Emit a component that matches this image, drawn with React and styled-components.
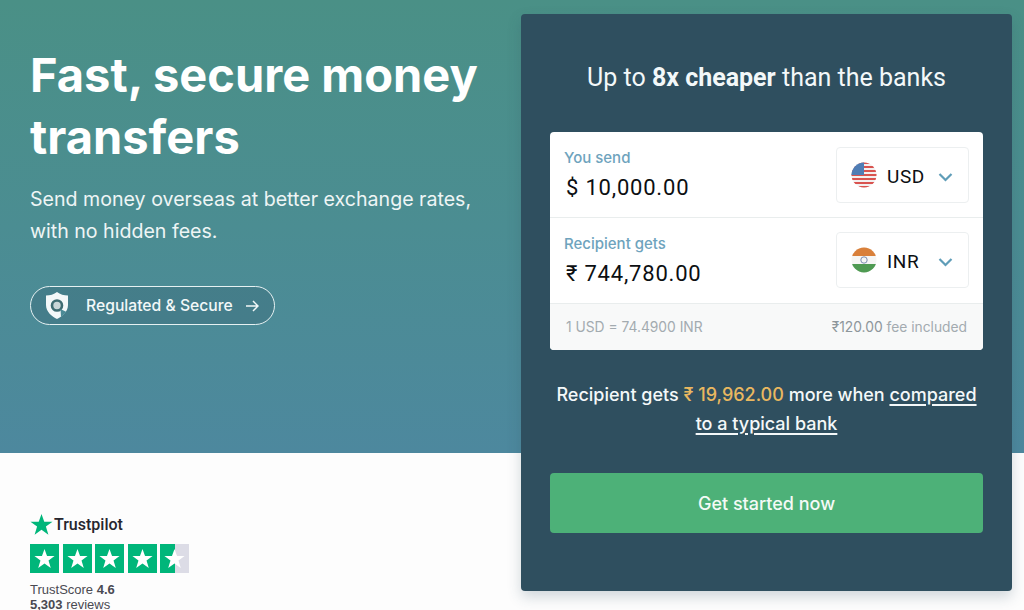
import React from 'react';
import styled, { createGlobalStyle } from 'styled-components';

const GlobalStyle = createGlobalStyle`
  html, body {
    margin: 0;
    padding: 0;
    background: #fff;
    overflow: hidden;
  }
  * {
    box-sizing: border-box;
  }
`;

const Page = styled.div`
  width: 1024px;
  height: 610px;
  overflow: hidden;
  display: grid;
  grid-template-columns: 521px 491px;
  font-family: Inter, "Noto Sans", sans-serif;
  background:
    linear-gradient(180deg, #4a9086 0%, #4b8d92 50%, #4d889e 100%) top / 100% 453px no-repeat,
    #fdfdfd;
`;

const Left = styled.div`
  padding: 44px 30px 0;
  display: flex;
  flex-direction: column;
  height: 610px;
`;

const Title = styled.h1`
  margin: 0;
  color: #fff;
  font-size: 47px;
  line-height: 62px;
  font-weight: 700;
`;

const Lead = styled.p`
  margin: 15px 0 0;
  color: #eef5f5;
  font-size: 19.6px;
  line-height: 32px;
  font-weight: 400;
`;

const Pill = styled.a`
  margin-top: 39px;
  width: 245px;
  height: 39px;
  border: 1px solid #e6f1f2;
  border-radius: 20px;
  background: rgba(47, 79, 95, 0.22);
  display: flex;
  align-items: center;
  padding: 0 15px;
  color: #f2f8f8;
  font-size: 15.7px;
  font-weight: 500;
`;

const PillLabel = styled.span`
  margin-left: 18px;
  flex: 1;
`;

const Trust = styled.div`
  margin-top: auto;
  height: 97px;
  color: #4a4a52;
  font-family: "Liberation Sans", Arial, sans-serif;
  font-size: 13px;
  line-height: 15px;
`;

const Brand = styled.div`
  display: flex;
  align-items: center;
  gap: 1px;
  height: 22px;
  color: #26262e;
  font-family: Roboto, sans-serif;
  font-size: 16px;
  font-weight: 500;
`;

const Stars = styled.div`
  display: flex;
  gap: 3.5px;
  margin: 9px 0 9px;
`;

const StarBox = styled.div`
  width: 29px;
  height: 29px;
  display: flex;
  align-items: center;
  justify-content: center;
  background: ${p => p.$half
    ? 'linear-gradient(90deg, #00b67a 0 52%, #dcdce6 52% 100%)'
    : '#00b67a'};
`;

const Right = styled.div`
  padding-top: 14px;
`;

const Card = styled.section`
  width: 491px;
  height: 577px;
  background: #2f4f5f;
  border-radius: 4px;
  padding: 47px 29px 0;
  box-shadow: 0 6px 14px rgba(47, 79, 95, 0.22);
`;

const Headline = styled.h2`
  margin: 0;
  color: #f3f8f9;
  font-family: Roboto, sans-serif;
  font-size: 25px;
  line-height: 33px;
  font-weight: 400;
  text-align: center;
  b {
    font-weight: 700;
  }
`;

const Calculator = styled.div`
  margin-top: 38px;
  background: #fff;
  border-radius: 4px;
  overflow: hidden;
  height: 218px;
`;

const Row = styled.div`
  height: 86px;
  padding: 15px 14px 0 14px;
  display: flex;
  justify-content: space-between;
  border-bottom: 1px solid #e9eded;
`;

const Label = styled.div`
  color: #6ea3bd;
  font-size: 15px;
  line-height: 22px;
  font-weight: 500;
`;

const Amount = styled.div`
  margin-top: 6px;
  margin-left: 2px;
  color: #0c0f12;
  font-family: Roboto, sans-serif;
  font-size: 22px;
  line-height: 26px;
  letter-spacing: 0.8px;
`;

const Select = styled.div`
  width: 133px;
  height: 56px;
  margin-top: ${p => p.$raised ? '-1px' : '0'};
  border: 1px solid #eceff0;
  border-radius: 4px;
  display: flex;
  align-items: center;
  padding: 0 15px 0 14px;
  color: #0c0f12;
  font-family: Roboto, sans-serif;
  font-size: 19px;
  letter-spacing: 0.6px;
  svg:last-child {
    margin-top: 3px;
  }
`;

const Code = styled.span`
  margin-left: 10px;
  padding-top: 3px;
  flex: 1;
`;

const Rate = styled.div`
  height: 46px;
  background: #f8f9f9;
  padding: 0 16px;
  display: flex;
  align-items: center;
  justify-content: space-between;
  color: #a3abb0;
  font-size: 13.8px;
`;

const Fee = styled.span`
  b {
    font-weight: 400;
    color: #8d969b;
  }
`;

const Savings = styled.p`
  margin: 30px 0 0;
  color: #f4f8f9;
  font-size: 18px;
  line-height: 29px;
  font-weight: 500;
  text-align: center;
  white-space: nowrap;
  span {
    color: #e9b860;
  }
  u {
    text-underline-offset: 3px;
    text-decoration-thickness: 1.5px;
  }
`;

const Cta = styled.a`
  margin-top: 35px;
  height: 60px;
  border-radius: 4px;
  background: #4db178;
  color: #f4faf6;
  font-size: 18px;
  font-weight: 500;
  display: flex;
  align-items: center;
  justify-content: center;
`;

const ShieldIcon = () => (
  <svg width="22" height="27" viewBox="0 0 22 27">
    <path d="M11 0 C14 2.5 18 3.5 22 3.5 V13 C22 20 16 24.5 11 27 C6 24.5 0 20 0 13 V3.5 C4 3.5 8 2.5 11 0 Z" fill="#f4f8f9" />
    <circle cx="11" cy="13.5" r="5" fill="#c9d6d8" stroke="#3f6c72" strokeWidth="2.6" />
    <path d="M14.5 17 L20.5 20 L15 25 Z" fill="#4b8a96" />
  </svg>
);

const ArrowIcon = () => (
  <svg width="13" height="14" viewBox="0 0 13 14" fill="none" stroke="#f2f8f8" strokeWidth="1.5">
    <path d="M0 7 H12 M7 2 L12 7 L7 12" />
  </svg>
);

const Chevron = () => (
  <svg width="15" height="10" viewBox="0 0 15 10" fill="none" stroke="#5f9db8" strokeWidth="2.2">
    <path d="M1.5 2 L7.5 8 L13.5 2" />
  </svg>
);

const StarIcon = ({ size = 21, color = '#fff' }) => (
  <svg width={size} height={size} viewBox="0 0 24 24">
    <path d="M12 1 L14.9 9 H23.5 L16.6 14.2 L19.2 22.8 L12 17.6 L4.8 22.8 L7.4 14.2 L0.5 9 H9.1 Z" fill={color} />
  </svg>
);

const UsFlag = () => (
  <svg width="26" height="26" viewBox="0 0 26 26">
    <defs>
      <clipPath id="us"><circle cx="13" cy="13" r="12.5" /></clipPath>
    </defs>
    <g clipPath="url(#us)">
      <rect width="26" height="26" fill="#f3f0f0" />
      {[0, 4, 8, 12, 16, 20, 24].map(y => (
        <rect key={y} y={y} width="26" height="2" fill="#d9534f" />
      ))}
      <rect width="13" height="13" fill="#4f7db5" />
    </g>
  </svg>
);

const InFlag = () => (
  <svg width="26" height="26" viewBox="0 0 26 26">
    <defs>
      <clipPath id="in"><circle cx="13" cy="13" r="12.5" /></clipPath>
    </defs>
    <g clipPath="url(#in)">
      <rect width="26" height="26" fill="#f6f6f4" />
      <rect width="26" height="9" fill="#d9803a" />
      <rect y="17" width="26" height="9" fill="#4f9a52" />
      <circle cx="13" cy="13" r="3.2" fill="none" stroke="#7a8db0" strokeWidth="1" />
    </g>
  </svg>
);

export default function App() {
  return (
    <Page>
      <GlobalStyle />
      <Left>
        <Title>Fast, secure money transfers</Title>
        <Lead>Send money overseas at better exchange rates, with no hidden fees.</Lead>
        <Pill>
          <ShieldIcon />
          <PillLabel>Regulated &amp; Secure</PillLabel>
          <ArrowIcon />
        </Pill>
        <Trust>
          <Brand>
            <StarIcon size={23} color="#00b67a" />
            Trustpilot
          </Brand>
          <Stars>
            {[0, 1, 2, 3].map(i => (
              <StarBox key={i}><StarIcon /></StarBox>
            ))}
            <StarBox $half><StarIcon /></StarBox>
          </Stars>
          <div>TrustScore <b>4.6</b></div>
          <div><b>5,303</b> reviews</div>
        </Trust>
      </Left>
      <Right>
        <Card>
          <Headline>Up to <b>8x cheaper</b> than the banks</Headline>
          <Calculator>
            <Row>
              <div>
                <Label>You send</Label>
                <Amount>$ 10,000.00</Amount>
              </div>
              <Select>
                <UsFlag />
                <Code>USD</Code>
                <Chevron />
              </Select>
            </Row>
            <Row>
              <div>
                <Label>Recipient gets</Label>
                <Amount>₹ 744,780.00</Amount>
              </div>
              <Select $raised>
                <InFlag />
                <Code>INR</Code>
                <Chevron />
              </Select>
            </Row>
            <Rate>
              <span>1 USD = 74.4900 INR</span>
              <Fee><b>₹120.00</b> fee included</Fee>
            </Rate>
          </Calculator>
          <Savings>
            Recipient gets <span>₹ 19,962.00</span> more when <u>compared<br />to a typical bank</u>
          </Savings>
          <Cta>Get started now</Cta>
        </Card>
      </Right>
    </Page>
  );
}
